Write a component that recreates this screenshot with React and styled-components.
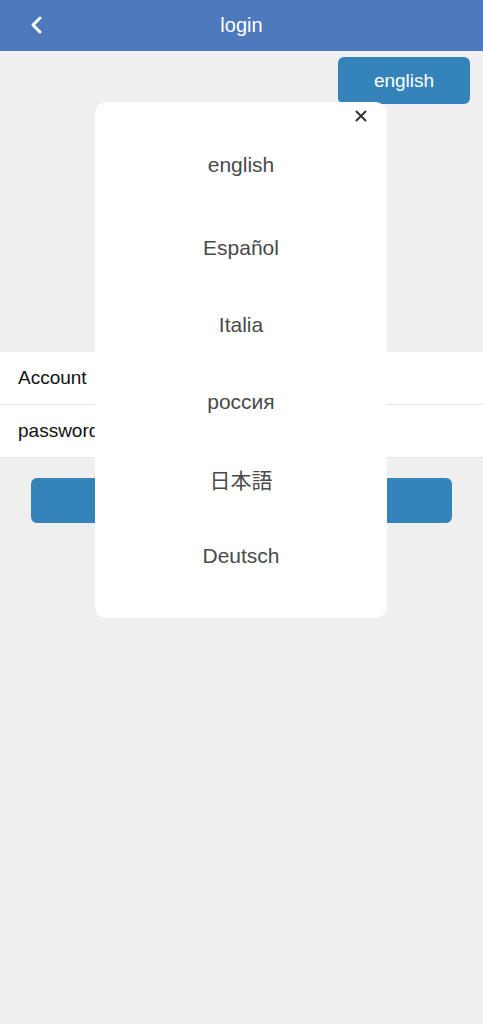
import { useState } from "react";
import styled, { createGlobalStyle } from "styled-components";

const GlobalStyle = createGlobalStyle`
  html, body {
    margin: 0;
    padding: 0;
    background: #f0eff0;
    font-family: "Liberation Sans", Arial, sans-serif;
  }
  * { box-sizing: border-box; }
`;

const languages = ["english", "Español", "Italia", "россия", "日本語", "Deutsch"];

export default function App() {
  const [open, setOpen] = useState(true);
  const [lang, setLang] = useState("english");

  return (
    <Page>
      <GlobalStyle />
      <Header>
        <Back aria-label="back">
          <svg width="16" height="20" viewBox="0 0 16 20">
            <path d="M11 3 L4 10 L11 17" fill="none" stroke="#fff" strokeWidth="3" strokeLinecap="round" strokeLinejoin="round" />
          </svg>
        </Back>
        <Title>login</Title>
      </Header>
      <LangBar>
        <LangButton onClick={() => setOpen(true)}>{lang}</LangButton>
      </LangBar>
      <Spacer />
      <Form>
        <Field>
          <FieldLabel>Account</FieldLabel>
        </Field>
        <Field>
          <FieldLabel>password</FieldLabel>
        </Field>
      </Form>
      <SubmitWrap>
        {/* label sits under the language dialog */}
        <Submit aria-label="login" />
      </SubmitWrap>

      {open && (
        <Modal>
          <Close onClick={() => setOpen(false)}>
            <svg width="12" height="12" viewBox="0 0 12 12">
              <path d="M1.5 1.5 L10.5 10.5 M10.5 1.5 L1.5 10.5" stroke="#333" strokeWidth="2" strokeLinecap="round" />
            </svg>
          </Close>
          <LangList>
            {languages.map((l) => (
              <LangItem key={l} onClick={() => { setLang(l); setOpen(false); }}>{l}</LangItem>
            ))}
          </LangList>
        </Modal>
      )}
    </Page>
  );
}

const Page = styled.div`
  position: relative;
  width: 483px;
  min-height: 1024px;
  background: #f0eff0;
`;

const Header = styled.div`
  height: 51px;
  background: #4f79bd;
  display: flex;
  align-items: center;
  justify-content: center;
  position: relative;
`;

const Back = styled.div`
  position: absolute;
  left: 29px;
  top: 15px;
  display: flex;
`;

const Title = styled.div`
  color: #fff;
  font-size: 20px;
`;

const LangBar = styled.div`
  display: flex;
  justify-content: flex-end;
  padding: 6px 13px 0 0;
`;

const LangButton = styled.button`
  width: 132px;
  height: 47px;
  border: none;
  border-radius: 6px;
  background: #3584b9;
  color: #fff;
  font-family: "Liberation Sans", Arial, sans-serif;
  font-size: 19px;
`;

const Spacer = styled.div`
  height: 248px;
`;

const Form = styled.div`
  background: #fff;
`;

const Field = styled.div`
  height: 53px;
  display: flex;
  align-items: center;
  padding-left: 18px;
  border-bottom: 1px solid #e6e6e6;
`;

const FieldLabel = styled.span`
  font-size: 19px;
  color: #111;
`;

const SubmitWrap = styled.div`
  padding: 20px 31px 0 31px;
`;

const Submit = styled.div`
  height: 45px;
  border-radius: 6px;
  background: #3584b9;
`;

const Modal = styled.div`
  position: absolute;
  left: 95px;
  top: 102px;
  width: 292px;
  height: 516px;
  background: #fff;
  border-radius: 12px;
  padding-top: 41px;
`;

const Close = styled.div`
  position: absolute;
  right: 20px;
  top: 8px;
  display: flex;
  cursor: pointer;
`;

const LangList = styled.div`
  display: flex;
  flex-direction: column;
`;

const LangItem = styled.div`
  height: 77px;
  display: flex;
  align-items: center;
  justify-content: center;
  font-size: 21px;
  color: #4a4a4a;
  font-family: "Liberation Sans", Arial, "Noto Sans CJK JP", sans-serif;
  cursor: pointer;
  &:first-child {
    height: 44px;
    margin-bottom: 22px;
  }
`;
